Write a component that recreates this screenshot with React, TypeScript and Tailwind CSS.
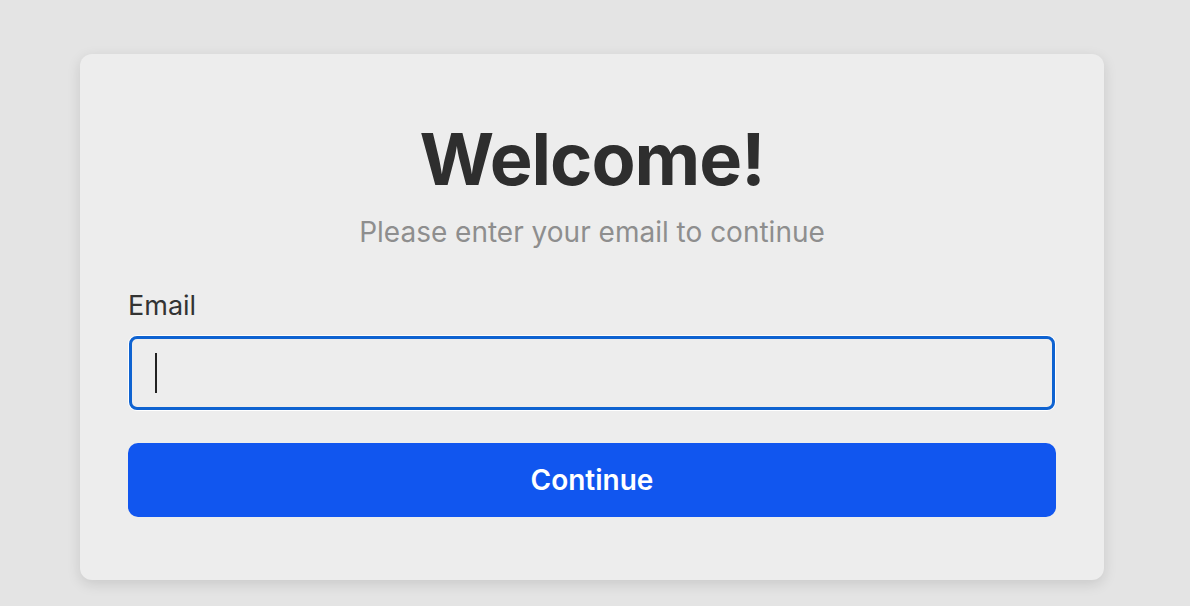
import React from "react";

export default function App() {
  return (
    <div className="w-[1190px] h-[606px] bg-[#e4e4e4] overflow-hidden" style={{ fontFamily: "Inter, 'Noto Sans', sans-serif" }}>
      <div className="mx-[80px] mt-[54px] w-[1024px] h-[526px] bg-[#ededed] rounded-[12px] shadow-[0_4px_14px_rgba(0,0,0,0.12)] px-[48px] pt-[67px]">
        <div className="flex flex-col items-center">
          <h1 className="text-[72px] leading-[76px] font-bold text-[#2e2e2e] tracking-[-1px]">Welcome!</h1>
          <p className="mt-[18px] text-[28px] leading-[34px] text-[#8e8e8e]">Please enter your email to continue</p>
        </div>
        <div className="mt-[40px] text-[27px] leading-[34px] text-[#333]">Email</div>
        <div className="mt-[12px] h-[76px] rounded-[9px] bg-white p-[1px]">
          <div className="h-full rounded-[8px] border-[3px] border-[#0f63d1] bg-[#ededed] flex items-center pl-[23px]">
            <div className="w-[2px] h-[40px] bg-[#222]" />
          </div>
        </div>
        <button className="mt-[32px] w-full h-[74px] rounded-[10px] bg-[#1156ef] text-white text-[28px] font-semibold">Continue</button>
      </div>
    </div>
  );
}
